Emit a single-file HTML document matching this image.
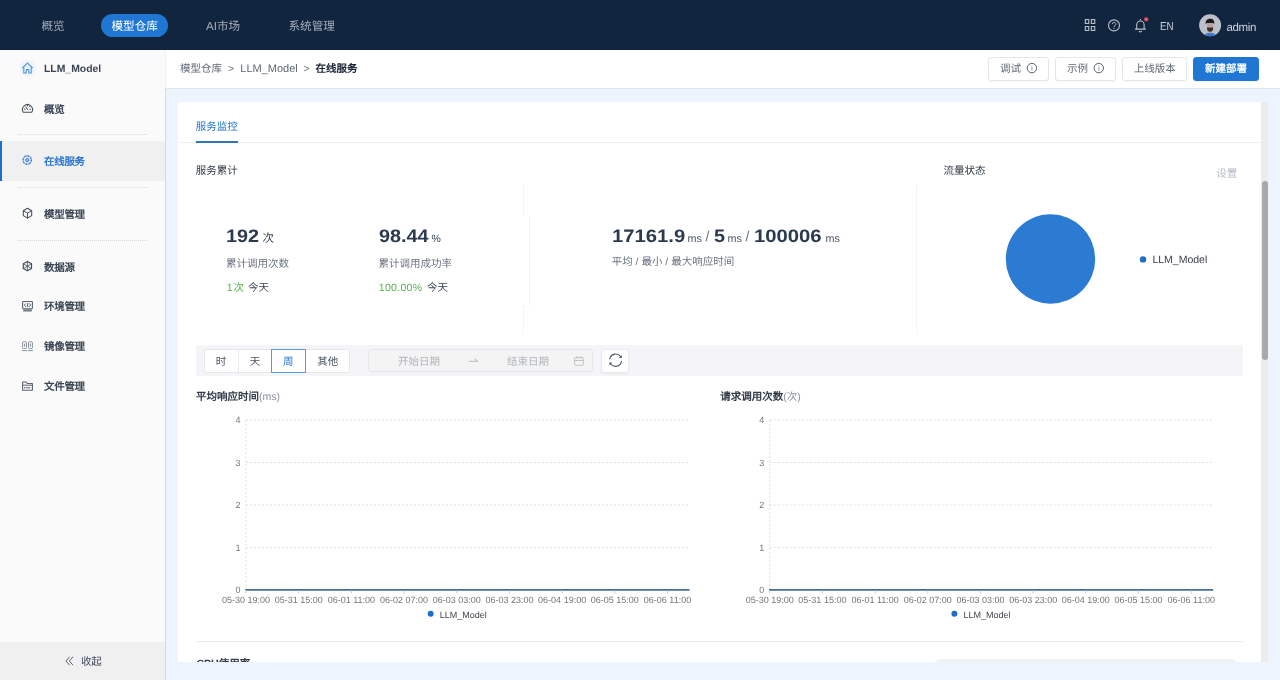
<!DOCTYPE html>
<html lang="zh-CN">
<head>
<meta charset="utf-8">
<title>在线服务 - LLM_Model</title>
<style>
*{box-sizing:border-box;margin:0;padding:0}
html,body{width:1280px;height:680px;overflow:hidden}
html{will-change:transform}
body{position:relative;background:#eef4fd;font-family:"Liberation Sans",sans-serif;font-size:10.5px;color:#3a4454;-webkit-font-smoothing:antialiased;text-rendering:geometricPrecision}
.a{position:absolute;white-space:nowrap}
.t{position:absolute;white-space:nowrap;line-height:18px;height:18px}
svg{position:absolute;overflow:visible;z-index:3;pointer-events:none}
b,.b{font-weight:bold}

/* top navigation */
#nav{left:0;top:0;width:1280px;height:50px;background:#11253f}
#nav .t{font-size:11.6px;color:#a3abb7;top:17.8px}
#pill{left:101px;top:13.5px;width:67px;height:23px;border-radius:12px;background:#1f77d3}
#nav .r{color:#cdd2da;font-size:11.5px;top:18.2px}

/* sidebar */
#side{left:0;top:50px;width:165px;height:630px;background:#fafafa}
#sideline{left:165px;top:50px;width:1px;height:630px;background:linear-gradient(#efefef 0,#efefef 38px,#d3d8e1 38px)}
#side .t{left:44px;font-weight:bold;color:#3a4454;letter-spacing:-.3px}
.dash{position:absolute;left:18px;width:129px;height:0;border-top:1px dotted #d9d9d9}
#act{left:0;top:91px;width:165px;height:40px;background:#f0f0f0}
#actbar{left:0;top:91px;width:2px;height:40px;background:#1b6fc8}
#fold{left:0;top:592px;width:165px;height:38px;background:#f0f0f0}

/* breadcrumb bar */
#crumb{left:166px;top:50px;width:1114px;height:38px;background:#fff;box-shadow:0 1px 0 #e1e5ec}
#crumb .t{top:10.2px;color:#5f6875}
.btn{position:absolute;top:7px;height:24px;border:1px solid #e3e6ea;border-radius:3px;background:#fff;box-shadow:0 1px 2px rgba(0,0,0,.04)}

/* card */
#card{left:178px;top:102px;width:1083px;height:560px;background:#fff;border-radius:3px 0 0 0;overflow:hidden}
#track{left:1261px;top:102px;width:7px;height:560px;background:#ececec}
#thumb{left:1262px;top:181px;width:6px;height:179px;border-radius:3px;background:#a9a9ad}

/* card internals */
#card .t{color:#3a4454}
#tabline{left:0;top:40px;width:1083px;height:1px;background:#eef0f3}
#tabink{left:17.75px;top:39px;width:42px;height:2px;background:#2f77b5}
.num{position:absolute;white-space:nowrap;font-size:18px;font-weight:bold;line-height:24px;height:24px;letter-spacing:0;transform:scaleX(1.1);transform-origin:0 50%;color:#2c3a4f;top:121.8px}
.unit{position:absolute;white-space:nowrap;line-height:16px;color:#3a4454}
#card .g{color:#6b7380}
#card .gr{color:#54b24a}
.vd{position:absolute;width:0;border-left:1px dotted #e8ebee}
#fbar{left:17.5px;top:243px;width:1047.5px;height:31.3px;background:#f5f5f7}
#seg{left:8.5px;top:4px;width:145.5px;height:23.6px;border:1px solid #e5e7eb;border-radius:3px;background:#fff}
#seg .t{top:2.6px;color:#4a5363}
#seg i{position:absolute;top:0;width:1px;height:21.6px;background:#e8eaed}
#segsel{left:66px;top:-1px;width:35px;height:23.6px;border:1px solid #5b9bdd}
#date{left:172px;top:4.2px;width:225px;height:23.3px;border:1px solid #e4e6e9;border-radius:3px;background:#f4f4f5}
#date .t{top:2.6px;color:#b1b5bc}
#rbtn{left:405.6px;top:4.2px;width:28.4px;height:23.4px;border:1px solid #e8eaed;box-shadow:0 1px 2px rgba(0,0,0,.05);border-radius:3px;background:#fff}
#hr2{left:17.7px;top:538.5px;width:1047.3px;height:1px;background:#e9ebee}
#sel2{left:757.5px;top:556.7px;width:300px;height:24px;border-radius:4px;background:#f2f2f4}
.ax{font-family:"Liberation Sans",sans-serif;font-size:9px;fill:#777}
</style>
</head>
<body>

<!-- ===== top navigation ===== -->
<div id="nav" class="a">
  <div id="pill" class="a"></div>
  <svg style="left:0;top:0" width="1280" height="50" viewBox="0 0 1280 50">
    <g fill="none" stroke="#b9bfc9" stroke-width="1.1">
      <!-- app grid -->
      <rect x="1085.35" y="19.55" width="3.4" height="3.9"/>
      <rect x="1091.35" y="19.55" width="3.4" height="3.9"/>
      <rect x="1085.35" y="26.55" width="3.4" height="3.9"/>
      <rect x="1091.35" y="26.55" width="3.4" height="3.9"/>
      <!-- help -->
      <circle cx="1114" cy="25.4" r="5.5"/>
      <path d="M1112.3 24.1a1.75 1.75 0 1 1 2.6 1.5c-.6.35-.85.7-.85 1.4" stroke-width="1"/>
      <!-- bell -->
      <path d="M1136.7 29v-4.3a3.7 3.7 0 0 1 7.4 0V29"/>
      <path d="M1134.9 29.1h11M1140.4 19v1.4M1138.9 30.9a1.6 1.6 0 0 0 3 0"/>
    </g>
    <circle cx="1114.05" cy="28.3" r=".6" fill="#c2c8d0"/>
    <circle cx="1146.2" cy="19.3" r="2.1" fill="#ee4d6b"/>
    <!-- avatar -->
    <clipPath id="avc"><circle cx="1210.1" cy="25.3" r="11"/></clipPath>
    <g clip-path="url(#avc)">
      <rect x="1198" y="13" width="25" height="25" fill="#bcc1c9"/>
      <path d="M1203.6 38c.2-3.6 2.4-5.3 6.5-5.3s6.3 1.700 6.500 5.300z" fill="#3577d0"/>
      <rect x="1208.600" y="29.500" width="3" height="3.800" fill="#b9a09a"/>
      <path d="M1207 23h6.200v5.200a3.100 3.100 0 0 1-6.200 0z" fill="#b9a3a0"/>
      <path d="M1207 27.600h6.200v1a3.100 3.100 0 0 1-6.200 0z" fill="#3b2e2b"/>
      <path d="M1205.800 24.600c-.6-3.800 1.200-5.900 4.300-5.900s4.700 2 4.100 5.900l-.9-1.700h-6.600z" fill="#1d1a1c"/>
    </g>
  </svg>

  <div class="t" style="left:41.5px">概览</div>
  <div class="t" style="left:101px;width:67.4px;text-align:center;color:#fff;font-weight:500">模型仓库</div>
  <div class="t" style="left:206px">AI市场</div>
  <div class="t" style="left:288.5px">系统管理</div>
  <div class="t r" style="left:1159.8px;transform:scaleX(.85);transform-origin:0 50%">EN</div>
  <div class="t r" style="left:1226.6px;top:19px;letter-spacing:-0.4px">admin</div>
</div>

<!-- ===== sidebar ===== -->
<div id="side" class="a">
  <div id="act" class="a"></div><div id="actbar" class="a"></div>
  <svg style="left:0;top:-50px" width="165" height="680" viewBox="0 0 165 680">
    <!-- home -->
    <circle cx="27.4" cy="68.1" r="8.3" fill="#edf3fb"/>
    <g fill="none" stroke="#4a8edb" stroke-width="1.05" stroke-linejoin="round" stroke-linecap="round">
      <path d="M22.500 67.800l5-4.700 5 4.700"/>
      <path d="M23.800 67v5.900h2.400v-3.300h2.600v3.300h2.400V67"/>
    </g>
    <g fill="none" stroke="#454e5d" stroke-width="1.05" stroke-linejoin="round" stroke-linecap="round">
      <!-- dashboard gauge -->
      <path d="M23.300 112.300a5 5 0 1 1 8.400 0z"/>
      <path d="M27.500 109.600l-1.700-2.700M24.300 109.200h.8M29.900 109.200h.8M27.500 105.300v.7M29.300 106.900l.5-.5" stroke-width="1"/>
      <!-- cube -->
      <path d="M27.500 208.300l4.200 2.400v4.900l-4.200 2.500-4.200-2.500v-4.900z"/>
      <path d="M23.500 210.800l4 2.400 4-2.400M27.500 213.200v4.700" stroke-width="1"/>
      <!-- data source: hexagon with spokes -->
      <path d="M27.400 261.500l4.100 2.300v4.700l-4.100 2.300-4.100-2.300v-4.700z" stroke-width="1.2"/>
      <path d="M27.400 261.800v8.700M23.500 263.900l7.800 4.500M31.300 263.900l-7.800 4.500" stroke-width=".8"/>
    </g>
    <!-- online service (active) -->
    <circle cx="27.200" cy="160.100" r="4.200" fill="#dfeaf8" stroke="#6a9fde" stroke-width="1.1"/>
    <circle cx="27.200" cy="160.100" r="4.200" fill="none" stroke="#2f6fbd" stroke-width="1.2" stroke-dasharray="1 2.300"/>
    <circle cx="27.200" cy="160.100" r="1.600" fill="#8db6e8" stroke="#3f82d2" stroke-width=".9"/>
    <g fill="none" stroke="#5a6270" stroke-width="1.1" stroke-linejoin="round">
      <!-- environment: monitor with code -->
      <rect x="22.600" y="301.500" width="9.800" height="7.300" rx=".8"/>
      <path d="M23.200 310.400h8.600" stroke-width="2.200" stroke="#737a86"/>
      <path d="M25.900 303.400l-1.600 1.700 1.600 1.700M29.100 303.400l1.600 1.700-1.600 1.700M28 303l-1 4.200" stroke-width="1"/>
      <!-- files: folder -->
      <path d="M22.600 390.300v-8.300h3.600l1.100 1.500h5.100v6.800z"/>
      <path d="M22.600 385.200h9.800M26 387.800h4.400" stroke-width="1"/>
    </g>
    <circle cx="24.700" cy="387.800" r=".8" fill="#5a6270"/>
    <!-- images: two slots -->
    <g fill="none" stroke="#8a909a" stroke-width="1">
      <rect x="22.600" y="341.800" width="3.900" height="6.800" rx="1"/>
      <rect x="28.500" y="341.800" width="3.900" height="6.800" rx="1"/>
      <path d="M24.550 343.700v3M30.450 343.700v3M22.100 350.600h4.900M28 350.600h4.900"/>
    </g>
    <!-- collapse chevrons -->
    <path d="M69.600 656.800l-3.600 4.200 3.600 4.200M73 656.800l-3.600 4.200 3.600 4.200" fill="none" stroke="#5a6270" stroke-width="1"/>
  </svg>

  <div class="t" style="top:10.5px;font-size:10.4px;letter-spacing:0">LLM_Model</div>
  <div class="t" style="top:50.5px">概览</div>
  <div class="dash" style="top:84px"></div>
  <div class="t" style="top:103px;color:#2a78cf">在线服务</div>
  <div class="dash" style="top:137px"></div>
  <div class="t" style="top:155.5px">模型管理</div>
  <div class="dash" style="top:189.5px"></div>
  <div class="t" style="top:208.5px">数据源</div>
  <div class="t" style="top:248px">环境管理</div>
  <div class="t" style="top:288px">镜像管理</div>
  <div class="t" style="top:328px">文件管理</div>
  <div id="fold" class="a"><div class="t" style="left:81px;top:11px;font-weight:normal">收起</div></div>
</div>
<div id="sideline" class="a"></div>

<!-- ===== breadcrumb bar ===== -->
<div id="crumb" class="a">

  <svg style="left:-166px;top:-50px" width="1280" height="90" viewBox="0 0 1280 90">
    <g fill="none" stroke="#5a6270" stroke-width="1">
      <circle cx="1031.900" cy="68.100" r="4.700"/>
      <circle cx="1098.800" cy="68.100" r="4.700"/>
    </g>
    <path d="M1031.900 67.300v3.100M1098.800 67.300v3.100" stroke="#9aa0a9" stroke-width="1.1"/>
    <circle cx="1031.900" cy="65.800" r=".6" fill="#9aa0a9"/><circle cx="1098.800" cy="65.800" r=".6" fill="#9aa0a9"/>
  </svg>
  <div class="t" style="left:14px">模型仓库</div>
  <div class="t" style="left:62px">&gt;</div>
  <div class="t" style="left:74.3px;font-size:11px">LLM_Model</div>
  <div class="t" style="left:137.5px">&gt;</div>
  <div class="t b" style="left:149.5px;color:#1a2233">在线服务</div>
  <div class="btn" style="left:822px;width:61px"><div class="t" style="left:11px;top:2.2px">调试</div></div>
  <div class="btn" style="left:889px;width:61px"><div class="t" style="left:11px;top:2.2px">示例</div></div>
  <div class="btn" style="left:956px;width:65px"><div class="t" style="left:0;width:63.6px;text-align:center;top:2.2px">上线版本</div></div>
  <div class="btn" style="left:1027px;width:66px;background:#1f77d3;border-color:#1f77d3"><div class="t b" style="left:0;width:63.800px;text-align:center;top:2.2px;color:#fff">新建部署</div></div>
</div>

<!-- ===== main card ===== -->
<div id="card" class="a">
  <div class="t" style="left:17.75px;top:15.5px;color:#2a78cf;font-weight:500">服务监控</div>
  <div id="tabline" class="a"></div><div id="tabink" class="a"></div>
  <div class="t" style="left:17.75px;top:60px;color:#333c4a;font-weight:500">服务累计</div>
  <div class="t" style="left:765.5px;top:60px;color:#333c4a;font-weight:500">流量状态</div>
  <div class="t" style="left:1038.2px;top:63px;color:#b7bcc4">设置</div>

  <!-- stat 1 -->
  <div class="num" style="left:48.2px">192</div>
  <div class="unit" style="left:84.5px;top:129px;font-size:11.5px">次</div>
  <div class="t g" style="left:48px;top:152.5px">累计调用次数</div>
  <div class="t gr" style="left:48.8px;top:176.5px">1</div><div class="t gr" style="left:55.4px;top:176.5px">次</div>
  <div class="t" style="left:70px;top:176.5px">今天</div>
  <!-- stat 2 -->
  <div class="num" style="left:200.8px">98.44</div>
  <div class="unit" style="left:253.5px;top:128.5px;font-size:10.5px">%</div>
  <div class="t g" style="left:200.5px;top:152.5px">累计调用成功率</div>
  <div class="t gr" style="left:200.75px;top:176.5px;letter-spacing:0.3px">100.00%</div>
  <div class="t" style="left:249px;top:176.5px">今天</div>
  <!-- stat 3 -->
  <div class="num" style="left:434.2px;transform:scaleX(1.125)">17161.9</div>
  <div class="unit" style="left:509.6px;top:128.5px;font-size:10.8px;color:#4a5566">ms</div>
  <div class="unit" style="left:527.5px;top:126px;font-size:14px;color:#6b7380">/</div>
  <div class="num" style="left:536px">5</div>
  <div class="unit" style="left:549.6px;top:128.5px;font-size:10.8px;color:#4a5566">ms</div>
  <div class="unit" style="left:567.5px;top:126px;font-size:14px;color:#6b7380">/</div>
  <div class="num" style="left:575.8px;transform:scaleX(1.125)">100006</div>
  <div class="unit" style="left:647.4px;top:128.5px;font-size:10.8px;color:#4a5566">ms</div>
  <div class="t g" style="left:433.7px;top:151px">平均 / 最小 / 最大响应时间</div>

  <!-- faint dotted separators -->
  <div class="vd" style="left:344.5px;top:82px;height:31px"></div>
  <div class="vd" style="left:350.7px;top:114px;height:89px"></div>
  <div class="vd" style="left:344.5px;top:204px;height:28px"></div>
  <div class="vd" style="left:737.8px;top:82px;height:150px"></div>

  <!-- pie -->
  <svg style="left:0;top:0" width="1083" height="240" viewBox="0 0 1083 240">
    <circle cx="872.5" cy="157" r="44.7" fill="#2b7bd3"/>
    <circle cx="965" cy="157.4" r="3.2" fill="#1f6fc6"/>
  </svg>
  <div class="t" style="left:974.4px;top:149.4px;color:#3a3f47">LLM_Model</div>

  <!-- filter bar -->
  <div id="fbar" class="a">
    <div id="seg" class="a">
      <i style="left:32.7px"></i>
      <div id="segsel" class="a"></div>
      <div class="t" style="left:-0.6px;width:33px;text-align:center">时</div>
      <div class="t" style="left:33.5px;width:33px;text-align:center">天</div>
      <div class="t" style="left:66px;width:34.5px;text-align:center;color:#2a78cf">周</div>
      <div class="t" style="left:101px;width:43.5px;text-align:center">其他</div>
    </div>
    <div id="date" class="a">
      <div class="t" style="left:29.5px">开始日期</div>
      <div class="t" style="left:138.5px">结束日期</div>
    </div>
    <div id="rbtn" class="a"></div>

    <svg style="left:-195.500px;top:-345px" width="1280" height="400" viewBox="0 0 1280 400">
      <g fill="none" stroke="#bfc3c9" stroke-width="1">
        <rect x="574.600" y="357.600" width="8.800" height="7.600" rx=".6"/>
        <path d="M574.600 360.500h8.800M576.900 356.200v2.200M581.100 356.200v2.200"/>
      </g>
      <g fill="none" stroke="#525b6b" stroke-width="1.15" stroke-linecap="round">
        <path d="M609.800 359a6 6 0 0 1 10.900-2.300"/>
        <path d="M621.400 361.400a6 6 0 0 1-10.900 2.300"/>
      </g>
      <path d="M469.100 361.300h8.800l-3.300-2.500" fill="none" stroke="#b3b7be" stroke-width="1" stroke-linejoin="round"/>
      <path d="M621.800 355v2.900h-2.900z" fill="#525b6b"/>
      <path d="M609.400 365.400v-2.900h2.900z" fill="#525b6b"/>
    </svg>
  </div>

  <!-- chart titles -->
  <div class="t" style="left:18px;top:286.2px;color:#333c4a"><b>平均响应时间</b><span style="color:#8a9099">(ms)</span></div>
  <div class="t" style="left:542.2px;top:286.2px;color:#333c4a"><b>请求调用次数</b><span style="color:#8a9099">(次)</span></div>
<svg style="left:0;top:0" width="1083" height="560" viewBox="0 0 1083 560">
<line x1="67.9" y1="318" x2="511.5" y2="318" stroke="#dfe1e4" stroke-width="1" stroke-dasharray="2 2"/>
<line x1="67.9" y1="360.5" x2="511.5" y2="360.5" stroke="#dfe1e4" stroke-width="1" stroke-dasharray="2 2"/>
<line x1="67.9" y1="403" x2="511.5" y2="403" stroke="#dfe1e4" stroke-width="1" stroke-dasharray="2 2"/>
<line x1="67.9" y1="445.5" x2="511.5" y2="445.5" stroke="#dfe1e4" stroke-width="1" stroke-dasharray="2 2"/>
<line x1="67.9" y1="318" x2="67.9" y2="488" stroke="#dfe1e4" stroke-width="1" stroke-dasharray="2 2"/>
<text class="ax" x="62.5" y="321.2" text-anchor="end">4</text>
<text class="ax" x="62.5" y="363.7" text-anchor="end">3</text>
<text class="ax" x="62.5" y="406.2" text-anchor="end">2</text>
<text class="ax" x="62.5" y="448.7" text-anchor="end">1</text>
<text class="ax" x="62.5" y="491.2" text-anchor="end">0</text>
<line x1="67.4" y1="487.8" x2="511.5" y2="487.8" stroke="#476e96" stroke-width="1.8"/>
<line x1="68.00" y1="488.5" x2="68.00" y2="491.5" stroke="#c9ccd1" stroke-width="1"/>
<text class="ax" x="68.00" y="501.2" text-anchor="middle">05-30 19:00</text>
<line x1="120.69" y1="488.5" x2="120.69" y2="491.5" stroke="#c9ccd1" stroke-width="1"/>
<text class="ax" x="120.69" y="501.2" text-anchor="middle">05-31 15:00</text>
<line x1="173.38" y1="488.5" x2="173.38" y2="491.5" stroke="#c9ccd1" stroke-width="1"/>
<text class="ax" x="173.38" y="501.2" text-anchor="middle">06-01 11:00</text>
<line x1="226.07" y1="488.5" x2="226.07" y2="491.5" stroke="#c9ccd1" stroke-width="1"/>
<text class="ax" x="226.07" y="501.2" text-anchor="middle">06-02 07:00</text>
<line x1="278.76" y1="488.5" x2="278.76" y2="491.5" stroke="#c9ccd1" stroke-width="1"/>
<text class="ax" x="278.76" y="501.2" text-anchor="middle">06-03 03:00</text>
<line x1="331.45" y1="488.5" x2="331.45" y2="491.5" stroke="#c9ccd1" stroke-width="1"/>
<text class="ax" x="331.45" y="501.2" text-anchor="middle">06-03 23:00</text>
<line x1="384.14" y1="488.5" x2="384.14" y2="491.5" stroke="#c9ccd1" stroke-width="1"/>
<text class="ax" x="384.14" y="501.2" text-anchor="middle">06-04 19:00</text>
<line x1="436.83" y1="488.5" x2="436.83" y2="491.5" stroke="#c9ccd1" stroke-width="1"/>
<text class="ax" x="436.83" y="501.2" text-anchor="middle">06-05 15:00</text>
<line x1="489.52" y1="488.5" x2="489.52" y2="491.5" stroke="#c9ccd1" stroke-width="1"/>
<text class="ax" x="489.52" y="501.2" text-anchor="middle">06-06 11:00</text>
<circle cx="252.7" cy="511.8" r="3" fill="#1f6fc6"/>
<text class="ax" x="261.8" y="516" fill="#333" style="fill:#42464d">LLM_Model</text>
</svg>
<svg style="left:0;top:0" width="1083" height="560" viewBox="0 0 1083 560">
<line x1="591.6" y1="318" x2="1035.2" y2="318" stroke="#dfe1e4" stroke-width="1" stroke-dasharray="2 2"/>
<line x1="591.6" y1="360.5" x2="1035.2" y2="360.5" stroke="#dfe1e4" stroke-width="1" stroke-dasharray="2 2"/>
<line x1="591.6" y1="403" x2="1035.2" y2="403" stroke="#dfe1e4" stroke-width="1" stroke-dasharray="2 2"/>
<line x1="591.6" y1="445.5" x2="1035.2" y2="445.5" stroke="#dfe1e4" stroke-width="1" stroke-dasharray="2 2"/>
<line x1="591.6" y1="318" x2="591.6" y2="488" stroke="#dfe1e4" stroke-width="1" stroke-dasharray="2 2"/>
<text class="ax" x="586.2" y="321.2" text-anchor="end">4</text>
<text class="ax" x="586.2" y="363.7" text-anchor="end">3</text>
<text class="ax" x="586.2" y="406.2" text-anchor="end">2</text>
<text class="ax" x="586.2" y="448.7" text-anchor="end">1</text>
<text class="ax" x="586.2" y="491.2" text-anchor="end">0</text>
<line x1="591.1" y1="487.8" x2="1035.2" y2="487.8" stroke="#476e96" stroke-width="1.8"/>
<line x1="591.70" y1="488.5" x2="591.70" y2="491.5" stroke="#c9ccd1" stroke-width="1"/>
<text class="ax" x="591.70" y="501.2" text-anchor="middle">05-30 19:00</text>
<line x1="644.39" y1="488.5" x2="644.39" y2="491.5" stroke="#c9ccd1" stroke-width="1"/>
<text class="ax" x="644.39" y="501.2" text-anchor="middle">05-31 15:00</text>
<line x1="697.08" y1="488.5" x2="697.08" y2="491.5" stroke="#c9ccd1" stroke-width="1"/>
<text class="ax" x="697.08" y="501.2" text-anchor="middle">06-01 11:00</text>
<line x1="749.77" y1="488.5" x2="749.77" y2="491.5" stroke="#c9ccd1" stroke-width="1"/>
<text class="ax" x="749.77" y="501.2" text-anchor="middle">06-02 07:00</text>
<line x1="802.46" y1="488.5" x2="802.46" y2="491.5" stroke="#c9ccd1" stroke-width="1"/>
<text class="ax" x="802.46" y="501.2" text-anchor="middle">06-03 03:00</text>
<line x1="855.15" y1="488.5" x2="855.15" y2="491.5" stroke="#c9ccd1" stroke-width="1"/>
<text class="ax" x="855.15" y="501.2" text-anchor="middle">06-03 23:00</text>
<line x1="907.84" y1="488.5" x2="907.84" y2="491.5" stroke="#c9ccd1" stroke-width="1"/>
<text class="ax" x="907.84" y="501.2" text-anchor="middle">06-04 19:00</text>
<line x1="960.53" y1="488.5" x2="960.53" y2="491.5" stroke="#c9ccd1" stroke-width="1"/>
<text class="ax" x="960.53" y="501.2" text-anchor="middle">06-05 15:00</text>
<line x1="1013.22" y1="488.5" x2="1013.22" y2="491.5" stroke="#c9ccd1" stroke-width="1"/>
<text class="ax" x="1013.22" y="501.2" text-anchor="middle">06-06 11:00</text>
<circle cx="776.4000000000001" cy="511.8" r="3" fill="#1f6fc6"/>
<text class="ax" x="785.5" y="516" fill="#333" style="fill:#42464d">LLM_Model</text>
</svg>
  <div id="hr2" class="a"></div>
  <div class="t" style="left:18.5px;top:553px;color:#333c4a;font-weight:bold">CPU使用率</div>
  <div id="sel2" class="a"></div>
</div>
<div id="track" class="a"></div>
<div id="thumb" class="a"></div>

</body>
</html>
